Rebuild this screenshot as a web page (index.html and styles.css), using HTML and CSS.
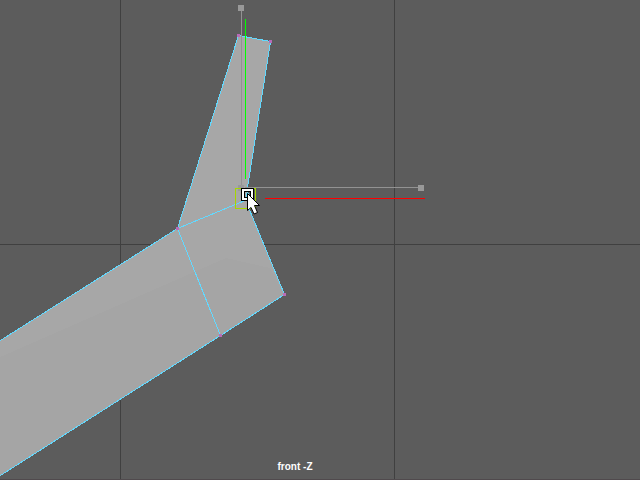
FILE: index.html
```html
<!DOCTYPE html>
<html lang="en">
<head>
<meta charset="utf-8">
<title>Viewport</title>
<link rel="stylesheet" href="styles.css">
</head>
<body>
<main class="viewport">
<svg class="scene" viewBox="0 0 640 480" preserveAspectRatio="xMidYMid slice" aria-label="Front view with polygon mesh">
  <g class="grid">
    <path d="M120.500 0V480M394.500 0V480M0 244.500H640"/>
  </g>
  <path class="border" d="M0 479.500H640"/>
  <path class="mesh" d="M238.500 35.500L270.500 41.500L247.500 187.500L247.500 205L284.500 294.500L220.500 335.500L-2 477V342L177.500 228.500Z"/>
  <path class="facet" d="M-2 358L226 258L270 268L284.500 294.500L220.500 335.500L-2 477Z"/>
  <path class="edges" d="M-2 342L177.500 228.500L238.500 35.500L270.500 41.500L247.500 187.500V205L284.500 294.500L220.500 335.500L-2 477M220.500 335.500L177.500 228.500L247.500 199.500"/>
  <g class="vertices">
    <rect x="237" y="34" width="3" height="3"/>
    <rect x="269" y="40" width="3" height="3"/>
    <rect x="176" y="227" width="3" height="3"/>
    <rect x="283" y="293" width="3" height="3"/>
    <rect x="219" y="334" width="3" height="3"/>
  </g>
  <g class="handles">
    <path d="M241.500 10V187M245 187.500H420"/>
    <rect x="238" y="5" width="6" height="6"/>
    <rect x="418" y="185" width="6" height="6"/>
    <rect x="238" y="185" width="6" height="6"/>
  </g>
  <path class="axis-y" d="M245.500 19V179"/>
  <path class="axis-x" d="M265 198.500H425"/>
  <path class="pivot" fill-rule="evenodd" d="M235 188H256V209H235ZM236 189H255V208H236Z"/>
  <g class="snap" fill-rule="evenodd">
    <path class="snap-dark" d="M241 188H254V201H241ZM245 192H250V197H245Z"/>
    <path class="snap-light" d="M242 189H253V200H242ZM244 191H251V198H244Z"/>
    <path class="snap-mark" d="M246.500 197V193.500H249"/>
  </g>
  <path class="cursor" d="M247.500 193.500V210.500L251 207.500L254 214L257.500 212.500L254.500 205.500H259.500Z"/>
</svg>
<p class="camera">front -Z</p>
</main>
</body>
</html>
```

FILE: styles.css
```css
body { margin: 0; background: #5c5c5c; }
.viewport { position: relative; height: 100vh; overflow: hidden; }
.scene { display: block; width: 100%; height: 100%; shape-rendering: crispEdges; }
.grid path { fill: none; stroke: #404040; }
.border { stroke: #504a4d; }
.mesh { fill: #a7a7a7; }
.facet { fill: #a5a5a5; }
.edges { fill: none; stroke: #62d9ff; }
.vertices { fill: #b86cb8; }
.handles path { fill: none; stroke: #929292; }
.handles rect { fill: #999; }
.axis-x { stroke: #f00; }
.axis-y { stroke: #0f0; }
.pivot { fill: #a5d800; }
.snap-dark { fill: #000; }
.snap-light { fill: #fff; }
.snap-mark { fill: none; stroke: #62d9ff; }
.cursor { fill: #fff; stroke: #000; shape-rendering: auto; }
.camera {
  position: absolute;
  bottom: 6px;
  left: 0;
  width: 100%;
  margin: 0;
  padding-right: 50px;
  box-sizing: border-box;
  text-align: center;
  color: #fff;
  font: bold 10px/14px "Liberation Sans", sans-serif;
}
```
